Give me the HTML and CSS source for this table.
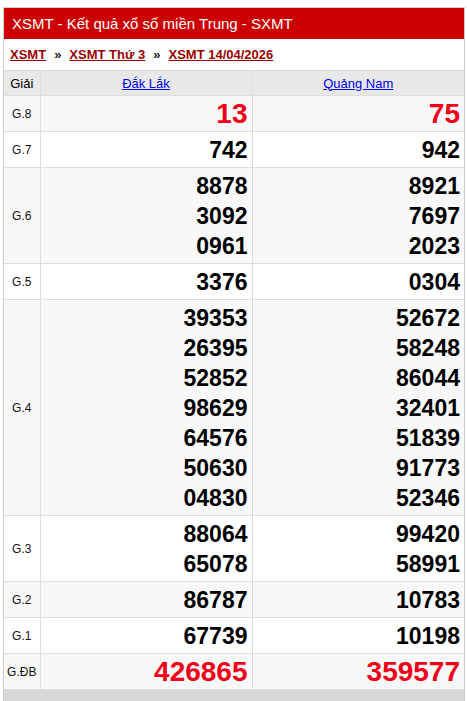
FILE: index.html
```html
<!DOCTYPE html>
<html lang="vi">
<head>
<meta charset="utf-8">
<title>XSMT</title>
<link rel="stylesheet" href="styles.css">
</head>
<body>
<div class="box">
  <h2 class="title">XSMT - Kết quả xổ số miền Trung - SXMT</h2>
  <div class="crumbs">
    <a href="#">XSMT</a><span class="sep">»</span><a href="#">XSMT Thứ 3</a><span class="sep">»</span><a href="#">XSMT 14/04/2026</a>
  </div>
  <table class="kq">
    <thead>
      <tr>
        <th class="giai">Giải</th>
        <th><a href="#">Đắk Lắk</a></th>
        <th><a href="#">Quảng Nam</a></th>
      </tr>
    </thead>
    <tbody>
      <tr class="alt">
        <td class="giai">G.8</td>
        <td class="num red big"><div>13</div></td>
        <td class="num red big"><div>75</div></td>
      </tr>
      <tr>
        <td class="giai">G.7</td>
        <td class="num"><div>742</div></td>
        <td class="num"><div>942</div></td>
      </tr>
      <tr class="alt">
        <td class="giai">G.6</td>
        <td class="num"><div>8878</div><div>3092</div><div>0961</div></td>
        <td class="num"><div>8921</div><div>7697</div><div>2023</div></td>
      </tr>
      <tr>
        <td class="giai">G.5</td>
        <td class="num"><div>3376</div></td>
        <td class="num"><div>0304</div></td>
      </tr>
      <tr class="alt">
        <td class="giai">G.4</td>
        <td class="num"><div>39353</div><div>26395</div><div>52852</div><div>98629</div><div>64576</div><div>50630</div><div>04830</div></td>
        <td class="num"><div>52672</div><div>58248</div><div>86044</div><div>32401</div><div>51839</div><div>91773</div><div>52346</div></td>
      </tr>
      <tr>
        <td class="giai">G.3</td>
        <td class="num"><div>88064</div><div>65078</div></td>
        <td class="num"><div>99420</div><div>58991</div></td>
      </tr>
      <tr class="alt">
        <td class="giai">G.2</td>
        <td class="num"><div>86787</div></td>
        <td class="num"><div>10783</div></td>
      </tr>
      <tr>
        <td class="giai">G.1</td>
        <td class="num"><div>67739</div></td>
        <td class="num"><div>10198</div></td>
      </tr>
      <tr class="alt">
        <td class="giai">G.ĐB</td>
        <td class="num red big"><div>426865</div></td>
        <td class="num red big"><div>359577</div></td>
      </tr>
    </tbody>
  </table>
  <div class="foot"></div>
</div>
</body>
</html>
```

FILE: styles.css
```css
html, body {
  margin: 0;
  padding: 0;
  background: #fff;
  font-family: "Liberation Sans", Arial, sans-serif;
}
.box {
  margin: 7px 2px 0 3px;
  border: 1px solid #ccc;
  border-bottom: none;
}
.title {
  margin: 0;
  background: #c00;
  color: #fff;
  font-size: 15px;
  font-weight: normal;
  height: 31px;
  line-height: 31px;
  padding: 0 8px;
}
.crumbs {
  height: 31px;
  line-height: 31px;
  padding: 0 6px;
  font-size: 13px;
  font-weight: bold;
  color: #333;
}
.crumbs a {
  color: #900;
  text-decoration: underline;
}
.crumbs .sep {
  padding: 0 8px;
  color: #222;
}
.kq {
  width: 100%;
  border-collapse: collapse;
  table-layout: fixed;
}
.kq th, .kq td {
  border: 1px solid #ddd;
}
.kq tr > :first-child {
  border-left: none;
}
.kq tr > :last-child {
  border-right: none;
}
.kq th {
  background: #e8e8e8;
  font-size: 13px;
  font-weight: normal;
  height: 24px;
  padding: 0 4px;
  text-align: center;
}
.kq th a {
  color: #00e;
}
.kq th.giai, .kq td.giai {
  width: 36px;
  box-sizing: border-box;
  padding: 0;
  text-align: center;
}
.kq td.giai {
  font-size: 12px;
  color: #111;
}
.kq tbody tr {
  background: #fff;
}
.kq tbody tr.alt {
  background: #f8f8f8;
}
.num {
  text-align: right;
  padding: 3px 4px 2px;
  font-size: 23px;
  font-weight: bold;
  color: #000;
}
.num div {
  line-height: 30px;
  height: 30px;
}
.num.red {
  color: #f00018;
}
.num.big {
  font-size: 28px;
}
.foot {
  height: 12px;
  background: #d8d8d8;
}
```
